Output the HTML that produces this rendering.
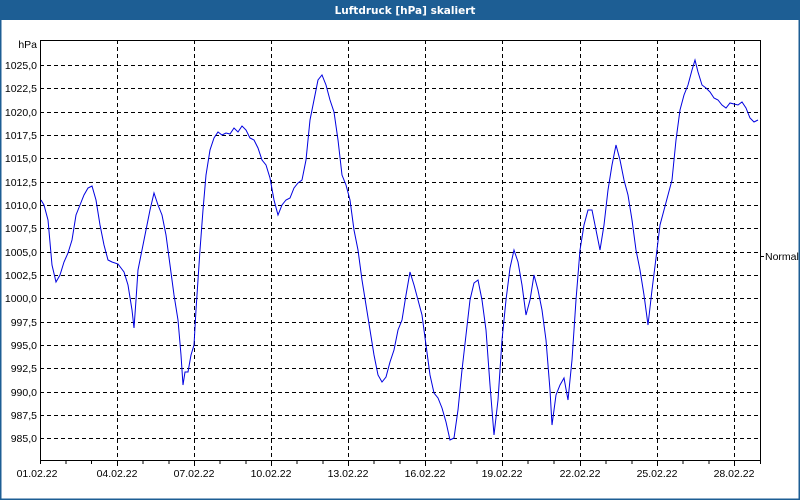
<!DOCTYPE html>
<html><head><meta charset="utf-8"><style>
html,body{margin:0;padding:0;width:800px;height:500px;overflow:hidden;background:#fff}
svg{display:block}
text{font-family:"Liberation Sans",sans-serif;font-size:10.5px;fill:#000}
</style></head><body>
<svg width="800" height="500" xmlns="http://www.w3.org/2000/svg">
<rect x="0" y="0" width="800" height="500" fill="#fff"/>
<rect x="0" y="0" width="800" height="20" fill="#1d5e94"/>
<rect x="0.5" y="0.5" width="799" height="499" fill="none" stroke="#1d5e94" stroke-width="2"/>
<text x="405" y="14" text-anchor="middle" style="fill:#fff;font-weight:bold;font-family:'DejaVu Sans',sans-serif;font-size:10.5px">Luftdruck [hPa] skaliert</text>
<g stroke="#000" stroke-width="1" stroke-dasharray="4,3" fill="none">
<path d="M40 65.5H760M40 88.5H760M40 112.5H760M40 135.5H760M40 158.5H760M40 182.5H760M40 205.5H760M40 228.5H760M40 252.5H760M40 275.5H760M40 298.5H760M40 322.5H760M40 345.5H760M40 368.5H760M40 392.5H760M40 415.5H760M40 438.5H760"/>
<path d="M117.5 40V460M194.5 40V460M271.5 40V460M348.5 40V460M425.5 40V460M502.5 40V460M580.5 40V460M657.5 40V460M734.5 40V460"/>
</g>
<rect x="40.5" y="40.5" width="720" height="420" fill="none" stroke="#000"/>
<g stroke="#000">
<path d="M40.5 461v3M66 461v3M91.5 461v3M117.5 461v5M143 461v3M169 461v3M194.5 461v5M220 461v3M246 461v3M271.5 461v5M297 461v3M323 461v3M348.5 461v5M374 461v3M400 461v3M425.5 461v5M451 461v3M477 461v3M502.5 461v5M528 461v3M554 461v3M580.5 461v5M606 461v3M632 461v3M657.5 461v5M683 461v3M709 461v3M734.5 461v5M760.5 461v3"/>
<path d="M761 256.5h3"/>
</g>
<g text-anchor="end">
<text x="37" y="48">hPa</text>
<text x="37" y="69">1025,0</text><text x="37" y="92">1022,5</text><text x="37" y="116">1020,0</text><text x="37" y="139">1017,5</text><text x="37" y="162">1015,0</text><text x="37" y="186">1012,5</text><text x="37" y="209">1010,0</text><text x="37" y="232">1007,5</text><text x="37" y="256">1005,0</text><text x="37" y="279">1002,5</text><text x="37" y="302">1000,0</text><text x="37" y="326">997,5</text><text x="37" y="349">995,0</text><text x="37" y="372">992,5</text><text x="37" y="396">990,0</text><text x="37" y="419">987,5</text><text x="37" y="442">985,0</text>
</g>
<text x="765" y="260">Normal</text>
<g text-anchor="middle">
<text x="37" y="477">01.02.22</text><text x="117" y="477">04.02.22</text><text x="194" y="477">07.02.22</text><text x="271" y="477">10.02.22</text><text x="348" y="477">13.02.22</text><text x="425" y="477">16.02.22</text><text x="502" y="477">19.02.22</text><text x="580" y="477">22.02.22</text><text x="657" y="477">25.02.22</text><text x="734" y="477">28.02.22</text>
</g>
<polyline fill="none" stroke="#0000e0" stroke-width="1" points="41,200 44,205 48,220 52,265 56,282 60,275 64,262 68,253 72,240 76,215 80,205 84,195 88,188 92,186 96,200 100,225 104,245 108,260 112,262 118,264 124,272 128,285 132,310 134,328 136,300 138,270 142,250 146,230 150,210 154,193 158,205 162,215 166,235 170,265 174,295 178,320 181,355 183,385 185,372 188,372 191,355 194,345 196,310 200,250 203,210 206,175 210,150 214,138 218,132 222,135 226,133 230,134 234,128 238,132 242,126 246,130 250,138 254,140 258,148 262,160 266,165 270,178 274,200 278,215 282,205 286,200 290,198 294,188 298,183 302,180 306,160 310,120 314,100 318,80 322,75 326,85 330,100 334,112 338,140 342,175 346,185 350,200 354,230 358,250 362,280 366,305 370,330 374,355 378,375 382,382 386,377 390,362 394,350 398,330 402,320 406,295 410,272 414,285 418,300 422,315 426,345 430,375 434,393 438,398 442,408 446,422 450,440 454,438 458,410 462,370 466,335 470,300 474,283 478,280 482,300 486,330 490,385 494,435 498,400 502,340 506,300 510,268 514,250 518,262 522,285 526,315 530,300 534,275 538,290 542,310 546,340 550,390 552,425 556,395 560,385 564,378 568,400 572,360 576,300 580,250 584,225 588,210 592,210 596,230 600,250 604,225 608,190 612,165 616,145 620,160 624,180 628,195 632,220 636,250 640,270 644,295 648,325 652,290 656,258 660,225 664,210 668,195 672,180 676,140 680,110 684,95 688,85 692,70 695,60 698,72 702,85 706,88 710,92 714,98 718,100 722,105 726,108 730,103 734,104 738,105 742,102 746,108 750,118 754,122 758,120"/>
</svg>
</body></html>
